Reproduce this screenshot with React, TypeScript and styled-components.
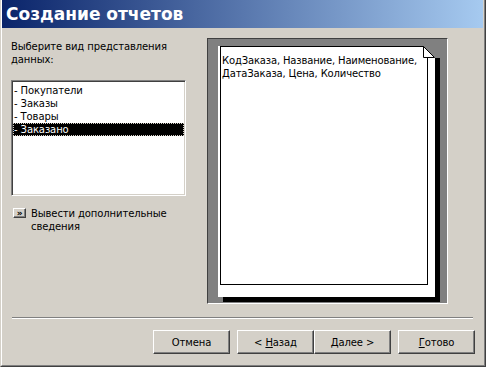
import styled, { createGlobalStyle } from "styled-components";

const GlobalStyle = createGlobalStyle`
  html, body {
    margin: 0;
    padding: 0;
    background: #d4d0c8;
  }
  body {
    width: 486px;
    height: 367px;
    overflow: hidden;
  }
`;

const UI_FONT = `"DejaVu Sans", Tahoma, sans-serif`;

const Window = styled.div`
  box-sizing: border-box;
  width: 486px;
  height: 367px;
  display: flex;
  background: #d4d0c8;
  border: 1px solid;
  border-top: none;
  border-color: #d4d0c8 #404040 #404040 #d4d0c8;
  font-family: ${UI_FONT};
  font-size: 10px;
  letter-spacing: -0.1px;
  color: #000;
`;

const WindowInner = styled.div`
  flex: 1;
  display: flex;
  flex-direction: column;
  border: 1px solid;
  border-top: none;
  border-color: #fff #808080 #808080 #fff;
  padding: 0 1px 2px 0;
`;

const TitleBar = styled.div`
  height: 28px;
  display: flex;
  align-items: center;
  padding-left: 4px;
  background: linear-gradient(to right, #0a246a, #a6caf0);
  color: #fff;
  font-weight: bold;
  font-size: 17px;
  letter-spacing: 0;
`;

const Content = styled.div`
  display: grid;
  grid-template-columns: 175px 241px;
  column-gap: 21px;
  padding: 10px 0 0 9px;
`;

const LeftColumn = styled.div`
  display: flex;
  flex-direction: column;
`;

const Prompt = styled.div`
  padding-top: 2px;
  line-height: 13px;
`;

const ListBox = styled.div`
  box-sizing: border-box;
  margin-top: 14px;
  height: 116px;
  padding-top: 3px;
  background: #fff;
  border: 1px solid;
  border-color: #808080 #fff #fff #808080;
  box-shadow: inset 1px 1px #404040, inset -1px -1px #d4d0c8;
`;

const ListItem = styled.div<{ $selected?: boolean }>`
  height: 13px;
  line-height: 13px;
  margin: 0 1px;
  padding-left: 1px;
  white-space: nowrap;
  background: ${(p) => (p.$selected ? "#000" : "transparent")};
  color: ${(p) => (p.$selected ? "#fff" : "#000")};
  outline: ${(p) => (p.$selected ? "1px dotted #d4d0c8" : "none")};
  outline-offset: -1px;
`;

const MoreRow = styled.div`
  display: flex;
  align-items: flex-start;
  gap: 5px;
  margin-top: 11px;
  padding-left: 2px;
  line-height: 13px;
`;

const SmallButton = styled.div`
  box-sizing: border-box;
  flex: none;
  width: 13px;
  height: 10px;
  margin-top: 1px;
  display: flex;
  align-items: center;
  justify-content: center;
  background: #d4d0c8;
  border: 1px solid;
  border-color: #fff #404040 #404040 #fff;
  box-shadow: inset -1px -1px #808080;
  font-size: 9px;
  font-weight: bold;
  line-height: 8px;
`;

const PreviewFrame = styled.div`
  box-sizing: border-box;
  width: 241px;
  height: 266px;
  padding: 7px 0 0 10px;
  background: #808080;
  border: 1px solid;
  border-color: #404040 #fff #fff #404040;
`;

const Page = styled.div`
  position: relative;
  width: 217px;
  height: 251px;
  background: #fff;
  box-shadow: 5px 5px 0 #000;
`;

const Sheet = styled.div`
  box-sizing: border-box;
  width: 208px;
  height: 239px;
  margin-left: 2px;
  padding: 7px 0 0 1px;
  border: 1px solid #000;
  line-height: 13px;
  letter-spacing: -0.15px;
`;

const DogEar = styled.svg`
  position: absolute;
  top: 0;
  right: -5px;
`;

const Separator = styled.div`
  margin: 13px 10px 0 10px;
  border-top: 1px solid #808080;
  border-bottom: 1px solid #fff;
`;

const ButtonRow = styled.div`
  display: flex;
  justify-content: flex-end;
  margin-top: 11px;
  padding-right: 8px;
`;

const Button = styled.div<{ $gap?: number }>`
  box-sizing: border-box;
  width: 77px;
  height: 24px;
  margin-left: ${(p) => p.$gap ?? 0}px;
  display: flex;
  align-items: center;
  justify-content: center;
  background: #d4d0c8;
  border: 1px solid;
  border-color: #fff #404040 #404040 #fff;
  box-shadow: inset -1px -1px #808080, inset 1px 1px #d4d0c8;
  u {
    text-decoration: underline;
  }
`;

const items = ["- Покупатели", "- Заказы", "- Товары", "- Заказано"];

export default function App() {
  return (
    <>
      <GlobalStyle />
      <Window>
        <WindowInner>
          <TitleBar>Создание отчетов</TitleBar>
          <Content>
            <LeftColumn>
              <Prompt>
                Выберите вид представления
                <br />
                данных:
              </Prompt>
              <ListBox>
                {items.map((item, i) => (
                  <ListItem key={item} $selected={i === 3}>
                    {item}
                  </ListItem>
                ))}
              </ListBox>
              <MoreRow>
                <SmallButton>»</SmallButton>
                <span>
                  Вывести дополнительные
                  <br />
                  сведения
                </span>
              </MoreRow>
            </LeftColumn>
            <PreviewFrame>
              <Page>
                <Sheet>
                  КодЗаказа, Название, Наименование,
                  <br />
                  ДатаЗаказа, Цена, Количество
                </Sheet>
                <DogEar width="17" height="12" viewBox="0 0 17 12">
                  <rect x="12" y="0" width="5" height="12" fill="#808080" />
                  <polygon points="0,0 12,0 12,12" fill="#808080" />
                  <polygon
                    points="0.5,0.5 11.5,11.5 0.5,11.5"
                    fill="#fff"
                    stroke="#000"
                    strokeWidth="1"
                  />
                </DogEar>
              </Page>
            </PreviewFrame>
          </Content>
          <Separator />
          <ButtonRow>
            <Button>Отмена</Button>
            <Button $gap={7}>
              &lt;&nbsp;<u>Н</u>азад
            </Button>
            <Button>
              <u>Д</u>алее&nbsp;&gt;
            </Button>
            <Button $gap={7}>
              <u>Г</u>отово
            </Button>
          </ButtonRow>
        </WindowInner>
      </Window>
    </>
  );
}
